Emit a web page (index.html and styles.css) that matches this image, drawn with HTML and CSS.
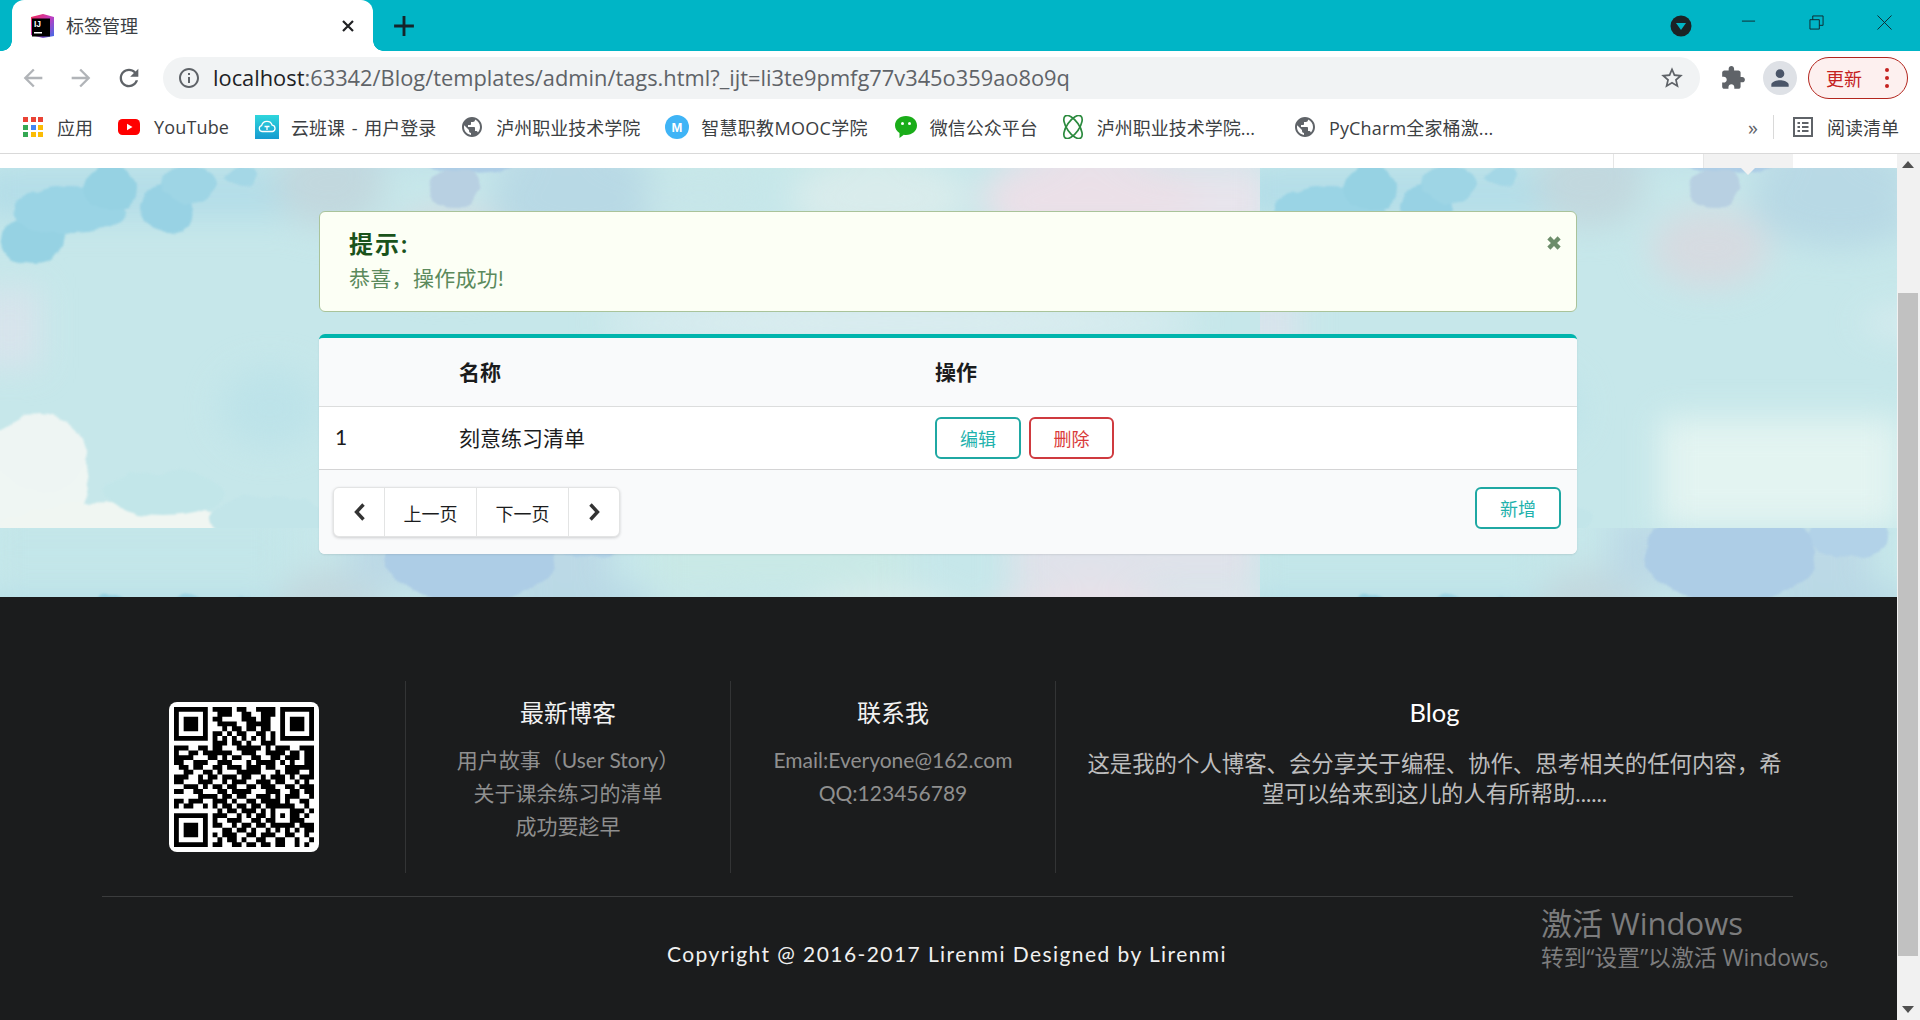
FILE: index.html
```html
<!DOCTYPE html>
<html lang="zh-CN">
<head>
<meta charset="utf-8">
<title>标签管理</title>
<link rel="stylesheet" href="styles.css">
</head>
<body>
<svg class="defs" width="0" height="0" aria-hidden="true">
  <symbol id="globe" viewBox="0 0 24 24"><path d="M12 2C6.48 2 2 6.48 2 12s4.48 10 10 10 10-4.48 10-10S17.52 2 12 2zm-1 17.93c-3.95-.49-7-3.85-7-7.93 0-.62.08-1.21.21-1.79L9 15v1c0 1.1.9 2 2 2v1.93zm6.9-2.54c-.26-.81-1-1.39-1.9-1.39h-1v-3c0-.55-.45-1-1-1H8v-2h2c.55 0 1-.45 1-1V7h2c1.1 0 2-.9 2-2v-.41c2.93 1.19 5 4.06 5 7.41 0 2.08-.8 3.97-2.1 5.39z"/></symbol>
</svg>

<header class="chrome">
  <div class="tabstrip">
    <div class="tab">
      <svg class="favicon" viewBox="0 0 24 24">
        <defs><linearGradient id="ij" x1="0" y1="0" x2="1" y2="1"><stop offset="0" stop-color="#f52a52"/><stop offset=".5" stop-color="#c23cc0"/><stop offset="1" stop-color="#3a6ee8"/></linearGradient></defs>
        <path d="M1 3 13 0l11 3v19l-11 2-12-3z" fill="url(#ij)"/>
        <rect x="2" y="4.500" width="18" height="18" fill="#000"/>
        <text x="4" y="13" class="favicon-text">IJ</text>
        <rect x="4" y="18" width="8" height="1.500" fill="#fff"/>
      </svg>
      <span class="tab-title">标签管理</span>
      <svg class="tab-close" viewBox="0 0 14 14"><path d="M2 2l10 10M12 2 2 12"/></svg>
    </div>
    <svg class="newtab" viewBox="0 0 20 20"><path d="M10 1v18M1 10h18"/></svg>
    <div class="strip-right">
      <svg class="profile-dot" viewBox="0 0 22 22"><circle cx="11" cy="11" r="10.500" fill="#1b2225"/><path d="M6 8h10l-5 7z" fill="#00b5c6"/></svg>
      <div class="winbtn"><svg viewBox="0 0 16 16"><path d="M1 6.500h14"/></svg></div>
      <div class="winbtn"><svg viewBox="0 0 16 16"><path d="M1 5h10v10H1zM4 5V1h11v10h-4"/></svg></div>
      <div class="winbtn"><svg viewBox="0 0 16 16"><path d="M.5.500l15 15M15.500.500l-15 15"/></svg></div>
    </div>
  </div>

  <div class="toolbar">
    <button class="tb-btn"><svg viewBox="0 0 24 24" class="ico-off"><path d="M20 11H7.830l5.590-5.590L12 4l-8 8 8 8 1.410-1.410L7.830 13H20v-2z"/></svg></button>
    <button class="tb-btn"><svg viewBox="0 0 24 24" class="ico-off"><path d="M4 11h12.170l-5.590-5.590L12 4l8 8-8 8-1.410-1.410L16.170 13H4v-2z"/></svg></button>
    <button class="tb-btn"><svg viewBox="0 0 24 24" class="ico-on"><path d="M17.650 6.350C16.200 4.900 14.210 4 12 4c-4.420 0-7.990 3.580-7.990 8s3.570 8 7.990 8c3.730 0 6.840-2.550 7.730-6h-2.080c-.82 2.330-3.040 4-5.650 4-3.310 0-6-2.690-6-6s2.690-6 6-6c1.660 0 3.140.69 4.220 1.780L13 11h7V4l-2.350 2.350z"/></svg></button>
    <div class="omnibox">
      <svg class="info" viewBox="0 0 24 24"><path d="M11 7h2v2h-2zm0 4h2v6h-2zm1-9C6.480 2 2 6.480 2 12s4.480 10 10 10 10-4.480 10-10S17.520 2 12 2zm0 18c-4.410 0-8-3.590-8-8s3.590-8 8-8 8 3.590 8 8-3.590 8-8 8z"/></svg>
      <span class="url"><b>localhost</b>:63342/Blog/templates/admin/tags.html?_ijt=li3te9pmfg77v345o359ao8o9q</span>
      <svg class="star" viewBox="0 0 24 24"><path d="M22 9.240l-7.190-.62L12 2 9.190 8.630 2 9.240l5.460 4.730L5.820 21 12 17.270 18.180 21l-1.630-7.030L22 9.240zM12 15.400l-3.760 2.270 1-4.280-3.320-2.880 4.380-.38L12 6.100l1.710 4.040 4.380.38-3.320 2.880 1 4.280L12 15.400z"/></svg>
    </div>
    <button class="tb-btn ext"><svg viewBox="0 0 24 24" class="ico-on"><path d="M20.500 11H19V7c0-1.100-.9-2-2-2h-4V3.500C13 2.120 11.880 1 10.500 1S8 2.120 8 3.500V5H4c-1.100 0-1.990.9-1.990 2v3.800H3.500c1.490 0 2.700 1.210 2.700 2.700s-1.210 2.700-2.700 2.700H2V20c0 1.100.9 2 2 2h3.800v-1.500c0-1.490 1.210-2.700 2.700-2.700 1.490 0 2.700 1.210 2.700 2.700V22H17c1.100 0 2-.9 2-2v-4h1.500c1.380 0 2.500-1.120 2.500-2.500S21.880 11 20.500 11z"/></svg></button>
    <div class="avatar"><svg viewBox="0 0 24 24"><path d="M12 12c2.210 0 4-1.790 4-4s-1.790-4-4-4-4 1.790-4 4 1.790 4 4 4zm0 2c-2.670 0-8 1.340-8 4v2h16v-2c0-2.660-5.330-4-8-4z"/></svg></div>
    <div class="update"><span>更新</span><i class="dots"></i></div>
  </div>

  <div class="bookmarks">
    <a class="bm">
      <span class="apps"><i class="r"></i><i class="r"></i><i class="r"></i><i class="g"></i><i class="b"></i><i class="y"></i><i class="g"></i><i class="y"></i><i class="y"></i></span>
      <span>应用</span>
    </a>
    <a class="bm bm-yt">
      <svg class="bm-ico" viewBox="0 0 24 24"><rect x="1" y="4" width="22" height="16" rx="4.500" fill="#f00"/><path d="M10 8.800v6.400l5.500-3.200z" fill="#fff"/></svg>
      <span>YouTube</span>
    </a>
    <a class="bm bm-cloud">
      <svg class="bm-ico" viewBox="0 0 24 24"><defs><linearGradient id="yb" x1="0" y1="0" x2="0" y2="1"><stop offset="0" stop-color="#2fd6dc"/><stop offset="1" stop-color="#159ad0"/></linearGradient></defs><rect width="24" height="24" fill="url(#yb)"/><path d="M7 16.500a3 3 0 0 1-.4-5.900 5.500 5.500 0 0 1 10.600-.4 3.200 3.200 0 0 1 .3 6.300zM9.500 11.500h5M12 11.500v3.500" fill="none" stroke="#fff" stroke-width="1.300"/></svg>
      <span>云班课 - 用户登录</span>
    </a>
    <a class="bm bm-college">
      <svg class="bm-ico gl" viewBox="0 0 24 24"><use href="#globe"/></svg>
      <span>泸州职业技术学院</span>
    </a>
    <a class="bm bm-mooc">
      <svg class="bm-ico" viewBox="0 0 24 24"><circle cx="12" cy="12" r="12" fill="#3fb4f6"/><text x="12" y="17" class="m-text">M</text></svg>
      <span>智慧职教MOOC学院</span>
    </a>
    <a class="bm">
      <svg class="bm-ico" viewBox="0 0 24 24"><path d="M12 1C5.700 1 1 5 1 10.500c0 3.300 1.800 5.800 4.500 7.500L5.500 23l4.300-3.300c.7.100 1.500.2 2.200.2 6.300 0 11-4 11-9.400S18.300 1 12 1z" fill="#1aad19"/><circle cx="8.500" cy="8.500" r="1.500" fill="#fff"/><circle cx="15.500" cy="8.500" r="1.500" fill="#fff"/></svg>
      <span>微信公众平台</span>
    </a>
    <a class="bm bm-lattice">
      <svg class="bm-ico" viewBox="0 0 24 24"><g fill="none" stroke="#2b8a3e" stroke-width="1.700"><ellipse cx="12" cy="12" rx="6" ry="13.500" transform="rotate(-35 12 12)"/><ellipse cx="12" cy="12" rx="6" ry="13.500" transform="rotate(35 12 12)"/></g></svg>
      <span>泸州职业技术学院...</span>
    </a>
    <a class="bm bm-py">
      <svg class="bm-ico gl" viewBox="0 0 24 24"><use href="#globe"/></svg>
      <span>PyCharm全家桶激...</span>
    </a>
    <div class="bm-end">
      <span class="more">»</span>
      <i class="bm-sep"></i>
      <a class="bm reader">
        <svg class="bm-ico" viewBox="0 0 24 24"><path d="M2 2h20v20H2zM4 4v16h16V4zM6.500 7h2.500v2H6.500zM11 7h6.500v2H11zM6.500 11h2.500v2H6.500zM11 11h6.500v2H11zM6.500 15h2.500v2H6.500zM11 15h6.500v2H11z" fill="#5f6368" fill-rule="evenodd"/></svg>
        <span>阅读清单</span>
      </a>
    </div>
  </div>
</header>

<div class="viewport">
  <div class="page">
    <nav class="menu-rest">
      <i class="menu-item"></i>
      <i class="menu-item active"></i>
    </nav>

    <main class="hero">
      <svg class="wash" width="1897" height="429" aria-hidden="true">
        <defs>
          <filter id="wc" x="-10%" y="-10%" width="120%" height="120%" color-interpolation-filters="sRGB">
            <feTurbulence type="fractalNoise" baseFrequency=".035" numOctaves="3" seed="7"/>
            <feDisplacementMap in="SourceGraphic" scale="12" xChannelSelector="R" yChannelSelector="G"/>
            <feGaussianBlur stdDeviation="1.200"/>
          </filter>
          <filter id="soft" x="-30%" y="-30%" width="160%" height="160%" color-interpolation-filters="sRGB">
            <feGaussianBlur stdDeviation="16"/>
          </filter>
          <pattern id="tile" patternUnits="userSpaceOnUse" x="0" y="-70" width="1260" height="430">
            <rect width="1260" height="430" fill="#c6e7ea"/>
            <g filter="url(#soft)">
              <rect x="-20" y="70" width="340" height="50" fill="#b3dde8"/>
              <rect x="-20" y="190" width="60" height="80" fill="#d8e4ec"/>
              <ellipse cx="330" cy="85" rx="55" ry="45" fill="#c2d8de"/>
              <ellipse cx="450" cy="150" rx="60" ry="40" fill="#d6dbe1"/>
              <ellipse cx="580" cy="100" rx="90" ry="50" fill="#b8d9e5"/>
              <ellipse cx="700" cy="100" rx="60" ry="30" fill="#c7e6e9"/>
              <ellipse cx="880" cy="100" rx="90" ry="40" fill="#d9ecec"/>
              <rect x="1000" y="70" width="270" height="70" fill="#e8e4ec"/>
              <ellipse cx="1090" cy="100" rx="110" ry="40" fill="#ebe0e8"/>
              <ellipse cx="900" cy="225" rx="300" ry="22" fill="#dcedf0"/>
              <ellipse cx="270" cy="310" rx="50" ry="40" fill="#bde3e9"/>
              <rect x="400" y="320" width="240" height="110" fill="#e3f4f1"/>
              <rect x="1010" y="0" width="250" height="60" fill="#e0e2ea"/>
              <rect x="650" y="0" width="260" height="60" fill="#c9e9e6"/>
              <rect x="-10" y="-10" width="300" height="70" fill="#c3e6e9"/>
              <rect x="350" y="-10" width="260" height="70" fill="#bcd9e6"/>
            </g>
            <g filter="url(#wc)">
              <ellipse cx="33" cy="142" rx="32" ry="24" fill="#96d2e3"/>
              <ellipse cx="70" cy="112" rx="55" ry="24" fill="#9ad4e5"/>
              <ellipse cx="110" cy="90" rx="26" ry="22" fill="#96d2e3"/>
              <ellipse cx="167" cy="110" rx="26" ry="26" fill="#98d2e4"/>
              <ellipse cx="190" cy="85" rx="30" ry="20" fill="#9ed5e5"/>
              <ellipse cx="242" cy="78" rx="16" ry="9" fill="#a4d7e6"/>
              <ellipse cx="455" cy="90" rx="26" ry="20" fill="#b8d0e2"/>
              <ellipse cx="15" cy="385" rx="75" ry="55" fill="#eff6f3"/>
              <ellipse cx="120" cy="425" rx="120" ry="20" fill="#f0f6f2"/>
              <ellipse cx="40" cy="355" rx="45" ry="40" fill="#eef5f3"/>
              <ellipse cx="165" cy="395" rx="60" ry="22" fill="#c2e6e9"/>
              <ellipse cx="270" cy="420" rx="60" ry="22" fill="#c2e5e9"/>
              <ellipse cx="470" cy="25" rx="85" ry="50" fill="#adcde6"/>
              <ellipse cx="590" cy="8" rx="40" ry="22" fill="#b2d2e8"/>
            </g>
          </pattern>
        </defs>
        <rect width="1897" height="429" fill="url(#tile)"/>
      </svg>
      <i class="pointer"></i>

      <div class="container">
        <section class="alert">
          <h3 class="alert-title">提示:</h3>
          <p class="alert-text">恭喜，操作成功!</p>
          <svg class="alert-close" viewBox="0 0 14 14"><path d="M1.800 4.200 4.200 1.800 7 4.600l2.800-2.800 2.400 2.400L9.400 7l2.800 2.800-2.400 2.400L7 9.400l-2.800 2.800-2.400-2.400L4.600 7z"/></svg>
        </section>

        <section class="card">
          <table class="table">
            <thead>
              <tr><th class="c-id"></th><th class="c-name">名称</th><th>操作</th></tr>
            </thead>
            <tbody>
              <tr>
                <td>1</td>
                <td>刻意练习清单</td>
                <td class="actions"><a class="btn teal">编辑</a><a class="btn red">删除</a></td>
              </tr>
            </tbody>
            <tfoot>
              <tr>
                <td colspan="3">
                  <div class="tf-row">
                    <div class="pager">
                      <a class="pg-ico"><svg viewBox="0 0 12 18"><path d="M9.500 1.500 2.500 9l7 7.500"/></svg></a>
                      <a class="pg-txt">上一页</a>
                      <a class="pg-txt">下一页</a>
                      <a class="pg-ico"><svg viewBox="0 0 12 18"><path d="M2.500 1.500 9.500 9l-7 7.500"/></svg></a>
                    </div>
                    <a class="btn teal add">新增</a>
                  </div>
                </td>
              </tr>
            </tfoot>
          </table>
        </section>
      </div>
    </main>

    <footer class="footer">
      <div class="foot-grid">
        <div class="foot-qr">
          <div class="qr">
            <svg viewBox="0 0 29 29"><path fill="none" stroke="#000" d="M0 .5h7m1 0h4m1 0h2m2 0h4m1 0h7M0 1.500h1m5 0h1m2 0h3m2 0h2m2 0h3m1 0h1m5 0h1M0 2.500h1m1 0h3m1 0h1m1 0h2m4 0h3m1 0h2m2 0h1m1 0h3m1 0h1M0 3.500h1m1 0h3m1 0h1m2 0h4m2 0h5m2 0h1m1 0h3m1 0h1M0 4.500h1m1 0h3m1 0h1m3 0h1m1 0h2m1 0h2m1 0h2m2 0h1m1 0h3m1 0h1M0 5.500h1m5 0h1m1 0h2m1 0h1m1 0h2m2 0h2m1 0h1m1 0h1m5 0h1M0 6.500h7m1 0h1m1 0h1m1 0h1m1 0h1m1 0h1m1 0h1m1 0h1m1 0h7M8 7.500h3m1 0h2m1 0h1m2 0h3M0 8.500h3m2 0h2m1 0h2m3 0h5m1 0h1m1 0h3m2 0h3M0 9.500h1m2 0h2m1 0h6m2 0h3m2 0h4m1 0h2m1 0h2M0 10.500h4m3 0h2m1 0h1m1 0h2m2 0h2m2 0h2m1 0h3m1 0h2M0 11.500h2m2 0h3m2 0h3m3 0h1m1 0h4m1 0h1m1 0h1m2 0h2M1 12.500h2m1 0h2m2 0h2m1 0h3m1 0h3m1 0h2m2 0h6M2 13.500h2m2 0h2m1 0h1m3 0h5m3 0h1m1 0h3m2 0h1M0 14.500h3m2 0h1m1 0h2m1 0h3m1 0h2m2 0h1m1 0h3m1 0h1m1 0h3M0 15.500h2m3 0h3m2 0h1m1 0h3m2 0h3m1 0h2m2 0h1m1 0h1M2 16.500h3m1 0h1m1 0h2m1 0h2m2 0h2m1 0h3m2 0h2m1 0h3M0 17.500h2m2 0h2m3 0h2m1 0h4m3 0h3m2 0h2m1 0h2M5 18.500h4m1 0h2m1 0h2m2 0h3m1 0h1m1 0h3m2 0h1M0 19.500h2m1 0h3m2 0h3m1 0h1m2 0h2m1 0h4m1 0h1m2 0h2M0 20.500h1m1 0h2m2 0h1m1 0h1m1 0h2m1 0h2m1 0h2m1 0h6m2 0h1M9 21.500h1m1 0h2m1 0h3m1 0h1m1 0h1m3 0h3m1 0h1M0 22.500h7m1 0h3m2 0h1m1 0h1m1 0h2m1 0h1m1 0h1m1 0h2m1 0h1M0 23.500h1m5 0h1m1 0h1m2 0h3m2 0h2m1 0h2m3 0h3M0 24.500h1m1 0h3m1 0h1m1 0h2m2 0h1m1 0h2m1 0h2m1 0h5m1 0h3M0 25.500h1m1 0h3m1 0h1m3 0h2m1 0h2m1 0h1m2 0h1m1 0h1m1 0h1m1 0h1m1 0h2M0 26.500h1m1 0h3m1 0h1m1 0h1m1 0h3m2 0h2m1 0h3m2 0h2m2 0h1M0 27.500h1m5 0h1m2 0h1m1 0h2m1 0h1m2 0h2m2 0h2m2 0h1m2 0h1M0 28.500h7m1 0h2m2 0h2m1 0h2m1 0h2m1 0h2m2 0h1m1 0h1"/></svg>
          </div>
        </div>
        <div class="foot-col">
          <h4>最新博客</h4>
          <a>用户故事（User Story）</a>
          <a>关于课余练习的清单</a>
          <a>成功要趁早</a>
        </div>
        <div class="foot-col">
          <h4>联系我</h4>
          <a>Email:Everyone@162.com</a>
          <a>QQ:123456789</a>
        </div>
        <div class="foot-col foot-blog">
          <h4>Blog</h4>
          <p>这是我的个人博客、会分享关于编程、协作、思考相关的任何内容，希望可以给来到这儿的人有所帮助......</p>
        </div>
      </div>
      <div class="foot-rule"></div>
      <p class="copyright">Copyright @ 2016-2017 Lirenmi Designed by Lirenmi</p>
      <div class="watermark">
        <div class="wm-1">激活 Windows</div>
        <div class="wm-2">转到“设置”以激活 Windows。</div>
      </div>
    </footer>
  </div>

  <aside class="scrollbar">
    <i class="sb-up"></i>
    <i class="sb-thumb"></i>
    <i class="sb-down"></i>
  </aside>
</div>
</body>
</html>
```
FILE: styles.css
```css
* { box-sizing: border-box; }
html, body { margin: 0; height: 100%; overflow: hidden; }
body {
  display: flex;
  flex-direction: column;
  width: 1920px;
  height: 1020px;
  font-family: Lato, "Noto Sans CJK SC", sans-serif;
  font-size: 21px;
  color: #1b1c1d;
  background: #fff;
}
.defs { position: absolute; }
a { color: inherit; text-decoration: none; }
button { border: 0; background: none; padding: 0; }

/* browser chrome */
.chrome { flex: 0 0 154px; display: flex; flex-direction: column; background: #fff; border-bottom: 1px solid #d9d9d9; font-family: "Open Sans", "Noto Sans CJK SC", sans-serif; color: #3c4043; }
.tabstrip { flex: 0 0 51px; display: flex; align-items: center; padding-left: 12px; background: #00b5c6; }
.tab { position: relative; align-self: stretch; width: 361px; display: flex; align-items: center; padding-left: 18px; background: #fff; border-radius: 12px 12px 0 0; }
.tab::before, .tab::after { content: ""; position: absolute; bottom: 0; width: 10px; height: 10px; }
.tab::before { left: -10px; background: radial-gradient(circle at 0 0, #00b5c6 9.500px, #fff 10px); }
.tab::after { right: -10px; background: radial-gradient(circle at 100% 0, #00b5c6 9.500px, #fff 10px); }
.favicon { width: 24px; height: 24px; flex: none; }
.favicon-text { font: 700 8.500px "Liberation Sans", sans-serif; fill: #fff; }
.tab-title { margin: 0 0 2px 12px; font-size: 18px; color: #3c4043; }
.tab-close { width: 14px; height: 14px; margin-left: auto; margin-right: 18px; fill: none; stroke: #202124; stroke-width: 2.200; }
.newtab { width: 22px; height: 22px; margin-left: 20px; fill: none; stroke: #15252b; stroke-width: 2.600; }
.strip-right { margin-left: auto; padding-right: 2px; display: flex; align-items: center; }
.profile-dot { width: 22px; height: 22px; margin-right: 22px; }
.winbtn { width: 68px; height: 51px; display: flex; align-items: center; justify-content: center; padding-bottom: 7px; }
.winbtn svg { width: 15px; height: 15px; fill: none; stroke: #10262c; stroke-width: 1; }

.toolbar { flex: 0 0 50px; display: flex; align-items: center; padding: 4px 12px 0 9px; }
.tb-btn { width: 48px; height: 32px; display: flex; align-items: center; justify-content: center; flex: none; }
.tb-btn svg { width: 28px; height: 28px; }
.ico-off { fill: #b1b4b8; }
.ico-on { fill: #5f6368; }
.omnibox { flex: 1; height: 42px; margin-left: 10px; display: flex; align-items: center; padding: 0 15px 0 14px; border-radius: 21px; background: #f1f3f4; }
.info { width: 24px; height: 24px; fill: #5f6368; flex: none; }
.url { margin: 0 0 2px 12px; font-size: 21.840px; color: #5f6368; white-space: nowrap; }
.url b { font-weight: 400; color: #202124; }
.star { width: 26px; height: 26px; margin-left: auto; fill: #5f6368; }
.ext { margin-left: 9px; }
.ext svg { width: 26px; height: 26px; }
.avatar { width: 34px; height: 34px; margin: 0 6px; border-radius: 50%; display: flex; align-items: center; justify-content: center; background: #dee1e6; flex: none; }
.avatar svg { width: 26px; height: 26px; fill: #4a5568; }
.update { width: 100px; height: 42px; margin-left: 5px; display: flex; align-items: center; justify-content: space-between; padding: 0 17px 0 17px; border: 1.500px solid #b3261e; border-radius: 21px; background: #fdf0ef; color: #c5221f; font-size: 18px; flex: none; }
.dots { width: 4px; height: 4px; border-radius: 50%; background: #c5221f; box-shadow: 0 -8px 0 #c5221f, 0 8px 0 #c5221f; margin-right: 1px; }

.bookmarks { flex: 1; display: flex; align-items: center; padding-left: 23px; gap: 26px; font-size: 18px; color: #3c4043; white-space: nowrap; }
.bm { display: flex; align-items: center; gap: 12px; }
.bm-ico { width: 24px; height: 24px; flex: none; }
.gl { fill: #5f6368; }
.m-text { font: 700 13px "Liberation Sans", sans-serif; fill: #fff; text-anchor: middle; }
.apps { display: grid; grid-template-columns: repeat(3, 5px); gap: 2.500px; width: 20px; margin-right: 2px; }
.apps i { height: 5px; }
.apps .r { background: #ea4335; }
.apps .g { background: #34a853; }
.apps .b { background: #4285f4; }
.apps .y { background: #fbbc05; }
.bm-yt { margin-left: -2px; gap: 13px; }
.bm-yt span { letter-spacing: .15px; }
.bm-cloud span { word-spacing: 2px; }
.bm-college { margin-left: -2px; }
.bm-mooc { margin-left: -1px; }
.bm-mooc span { letter-spacing: .3px; }
.bm-lattice { margin-left: -3px; }
.bm-py { margin-left: 12px; }
.bm-py span { letter-spacing: .15px; }
.bm-end { margin-left: auto; display: flex; align-items: center; padding-right: 21px; }
.more { font-size: 20px; margin-right: 15px; color: #5f6368; }
.bm-sep { width: 1px; height: 24px; background: #d9d9d9; margin-right: 17px; }

/* viewport */
.viewport { flex: 1; min-height: 0; display: flex; }
.page { flex: 1; min-width: 0; display: flex; flex-direction: column; }
.menu-rest { flex: 0 0 14px; display: flex; justify-content: flex-end; padding-right: 104px; background: #fff; }
.menu-item { width: 90px; border-left: 1px solid #e6e6e6; }
.menu-item.active { background: #f2f2f2; }

.hero { position: relative; flex: 0 0 429px; padding: 43px 320px 0 319px; overflow: hidden; }
.wash { position: absolute; left: 0; top: 0; }
.pointer { position: absolute; left: 1741px; top: 0; width: 0; height: 0; border: 7px solid transparent; border-top-color: #f2f2f2; }
.container { position: relative; display: flex; flex-direction: column; gap: 22px; }

.alert { position: relative; height: 101px; padding: 16px 29px 0; background: #fcfff5; border: 1.500px solid #a9c39a; border-radius: 6px; }
.alert-title { margin: 0; font-size: 24px; letter-spacing: 2px; line-height: 32px; font-weight: 700; color: #1a531b; }
.alert-text { margin: 2px 0 0; font-size: 21px; letter-spacing: .3px; line-height: 32px; color: #5b8a5c; }
.alert-close { position: absolute; right: 13px; top: 22px; width: 18px; height: 18px; fill: #6c8d6a; }

.card { height: 220px; border-top: 4px solid #00b5ad; border-radius: 6px; background: #fff; overflow: hidden; box-shadow: 0 1px 2px rgba(34,36,38,.1); }
.table { width: 100%; height: 216px; border-collapse: collapse; table-layout: fixed; }
.table th { height: 68px; padding: 0 16px 2px; text-align: left; font-weight: 700; background: #f9fafb; border-bottom: 1px solid #dcdddd; }
.c-id { width: 124px; }
.c-name { width: 476px; }
.table td { height: 63px; padding: 0 16px 2px; }
.table td.actions { padding-bottom: 0; }
.table tfoot td { height: 85px; padding: 17px 16px 0 14px; vertical-align: top; background: #f9fafb; border-top: 1px solid #d4d4d5; }
.actions { font-size: 0; }
.btn { display: inline-flex; align-items: center; justify-content: center; width: 86px; height: 42px; font-size: 18px; background: #fff; border: 2px solid; border-radius: 6px; }
.btn + .btn { margin-left: 8px; }
.teal { color: #1fb2ad; border-color: #1fa8a3; }
.red { width: 85px; color: #d93a3a; border-color: #cf3a3f; }
.tf-row { display: flex; justify-content: space-between; align-items: flex-start; }
.pager { display: flex; height: 50px; background: #fff; border: 1px solid #e3e4e4; border-radius: 6px; box-shadow: 0 1px 3px rgba(34,36,38,.2); font-size: 18px; }
.pager a { display: flex; align-items: center; justify-content: center; }
.pager a + a { border-left: 1px solid #e3e4e4; }
.pg-ico { width: 50px; padding-left: 1px; }
.pg-txt + .pg-ico { width: 51px; padding-left: 0; }
.pg-txt { width: 92px; padding-top: 2px; }
.pg-ico svg { width: 14px; height: 18px; fill: none; stroke: #333; stroke-width: 3.400; }

/* footer */
.footer { position: relative; flex: 1; min-height: 0; padding: 84px 0 0 83px; background: #1b1c1d; color: #fff; overflow: hidden; }
.foot-grid { display: grid; grid-template-columns: 322px 325px 325px 758px; width: 1730px; height: 192px; }
.foot-qr { padding: 21px 0 0 86px; }
.qr { width: 150px; height: 150px; padding: 5px; background: #fff; border-radius: 8px; }
.qr svg { display: block; width: 140px; height: 140px; }
.foot-col { display: flex; flex-direction: column; align-items: center; border-left: 1px solid #333435; padding-top: 15px; color: #8f8f8f; line-height: 33px; }
.foot-col h4 { margin: 0 0 13px; font-size: 24px; line-height: 34px; font-weight: 400; color: #f2f2f2; }
.foot-blog h4 { margin-top: -1px; font-size: 25.500px; color: #fff; }
.foot-blog p { margin: 7px 0 0; padding: 0 30px; text-align: center; font-size: 22.400px; color: #bdbdbd; line-height: 29.500px; }
.foot-rule { width: 1691px; height: 1px; margin: 23px 0 0 19px; background: #3b3c3d; }
.copyright { margin: 42px 0 0; width: 1728px; text-align: center; font-size: 21px; line-height: 30px; letter-spacing: 1.420px; color: #f0f0f0; }
.watermark { position: absolute; left: 1541px; top: 306px; color: #7c7c7d; font-family: "Open Sans", "Noto Sans CJK SC", sans-serif; }
.wm-1 { font-size: 31px; line-height: 40px; }
.wm-2 { font-size: 22.800px; line-height: 30px; }

/* scrollbar */
.scrollbar { flex: 0 0 23px; position: relative; background: #f1f1f1; }
.sb-thumb { position: absolute; left: 1px; right: 2px; top: 139px; height: 663px; background: #c1c1c1; }
.sb-up, .sb-down { position: absolute; left: 5px; width: 0; height: 0; border-left: 6px solid transparent; border-right: 6px solid transparent; }
.sb-up { top: 7px; border-bottom: 7px solid #505050; }
.sb-down { bottom: 7px; border-top: 7px solid #505050; }
```
